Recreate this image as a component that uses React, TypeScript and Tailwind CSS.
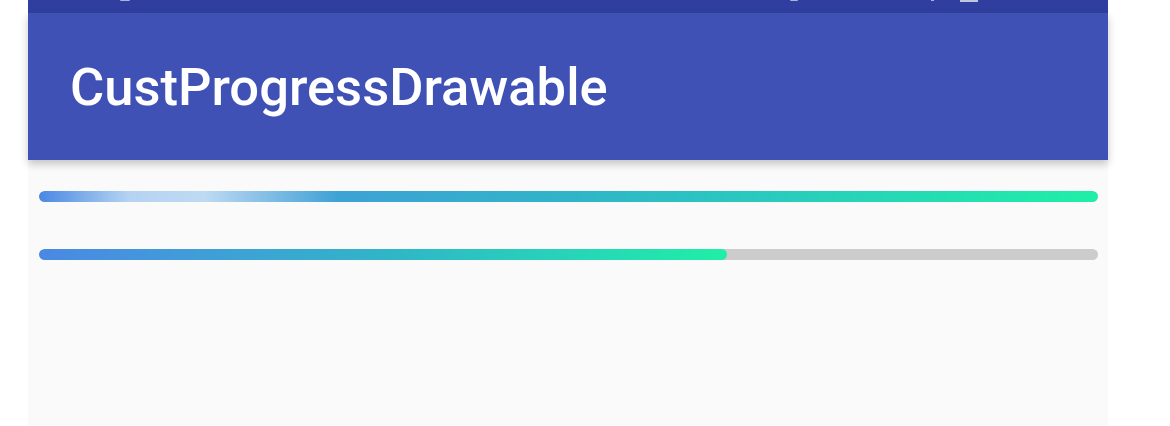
import React from "react";

function Bar({ percent, shimmer = false }: { percent: number; shimmer?: boolean }) {
  return (
    <div className="relative h-[11px] w-full overflow-hidden rounded-full bg-[#cccccc]">
      <div
        className="h-full rounded-full bg-gradient-to-r from-[#4a88e4] via-[#30b4c8] to-[#1fefa6]"
        style={{ width: `${percent}%` }}
      />
      {shimmer && (
        <div className="absolute inset-y-0 left-0 w-[300px] bg-[linear-gradient(90deg,rgba(255,255,255,0)_0%,rgba(255,255,255,0.6)_30%,rgba(255,255,255,0.65)_55%,rgba(255,255,255,0)_100%)]" />
      )}
    </div>
  );
}

export default function App() {
  return (
    <div className="h-[426px] w-[1170px] bg-white" style={{ fontFamily: "Roboto, 'Noto Sans', sans-serif" }}>
      <div className="ml-[28px] flex h-[426px] w-[1080px] flex-col bg-[#fafafa]">
        <div className="relative h-[13px] bg-[#303f9f]">
          <span className="absolute left-[92px] top-0 h-[1px] w-[10px] rounded-b bg-white/60" />
          <span className="absolute left-[762px] top-0 h-[1px] w-[8px] rounded-b bg-white/60" />
          <span className="absolute left-[903px] top-0 h-[1px] w-[3px] bg-white/60" />
          <span className="absolute left-[932px] top-0 h-[2px] w-[18px] bg-white/70" />
        </div>
        <div className="z-10 flex h-[147px] items-center bg-[#3f51b5] pl-[42px] pt-[2px] shadow-[0_4px_8px_rgba(0,0,0,0.22)]">
          <h1 className="text-[52.5px] font-medium leading-none tracking-[0px] text-white">CustProgressDrawable</h1>
        </div>
        <div className="flex flex-col gap-[47px] px-[11px] pr-[10px] pt-[31px]">
          <Bar percent={100} shimmer />
          <Bar percent={65} />
        </div>
      </div>
    </div>
  );
}
